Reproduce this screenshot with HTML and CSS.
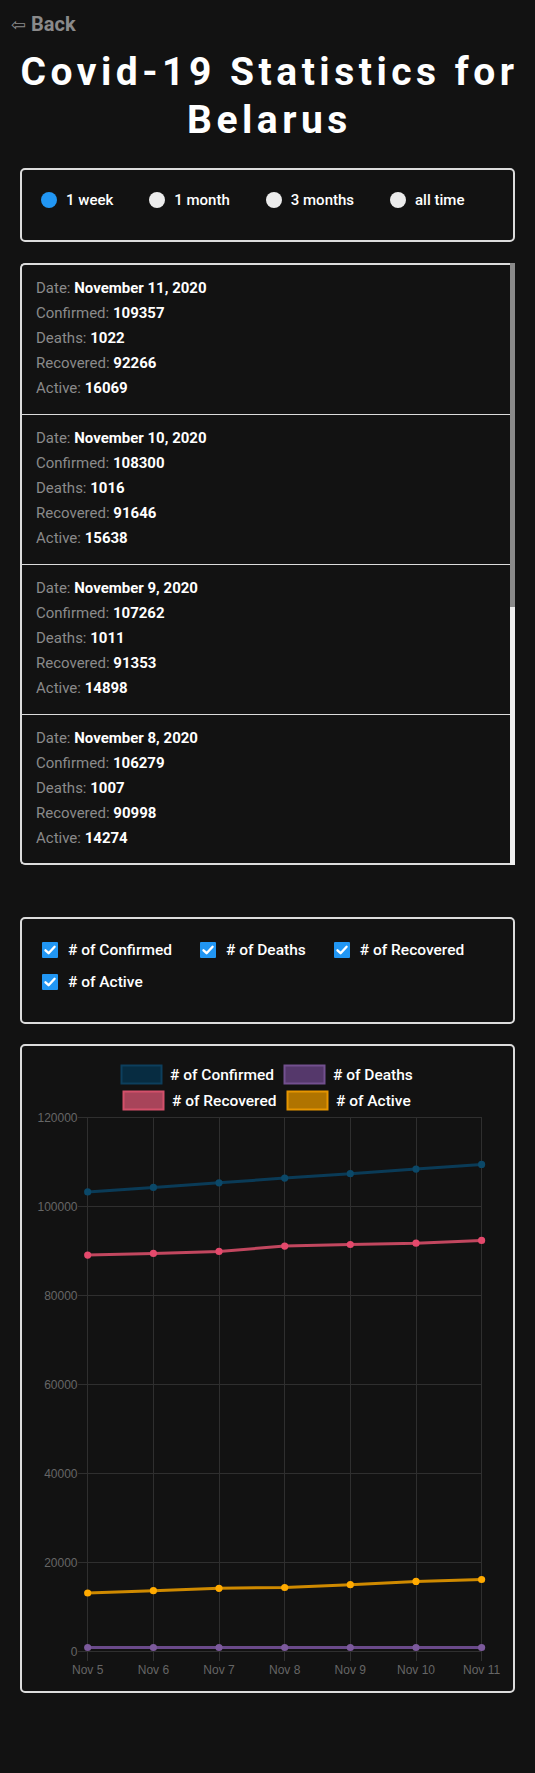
FILE: index.html
```html
<!DOCTYPE html>
<html lang="en">
<head>
<meta charset="utf-8">
<title>Covid-19 Statistics for Belarus</title>
<link rel="stylesheet" href="styles.css">
</head>
<body>
<div class="page">
  <a class="back" href="#"><span class="back-arrow">&#8678;</span> Back</a>
  <h1 class="title">Covid-19 Statistics for Belarus</h1>

  <div class="card periods">
    <label class="opt"><span class="radio checked"></span>1 week</label>
    <label class="opt"><span class="radio"></span>1 month</label>
    <label class="opt"><span class="radio"></span>3 months</label>
    <label class="opt"><span class="radio"></span>all time</label>
  </div>

  <div class="list-wrap">
    <div class="list">
      <div class="day">
        <div class="row"><span class="k">Date: </span><b>November 11, 2020</b></div>
        <div class="row"><span class="k">Confirmed: </span><b>109357</b></div>
        <div class="row"><span class="k">Deaths: </span><b>1022</b></div>
        <div class="row"><span class="k">Recovered: </span><b>92266</b></div>
        <div class="row"><span class="k">Active: </span><b>16069</b></div>
      </div>
      <div class="day">
        <div class="row"><span class="k">Date: </span><b>November 10, 2020</b></div>
        <div class="row"><span class="k">Confirmed: </span><b>108300</b></div>
        <div class="row"><span class="k">Deaths: </span><b>1016</b></div>
        <div class="row"><span class="k">Recovered: </span><b>91646</b></div>
        <div class="row"><span class="k">Active: </span><b>15638</b></div>
      </div>
      <div class="day">
        <div class="row"><span class="k">Date: </span><b>November 9, 2020</b></div>
        <div class="row"><span class="k">Confirmed: </span><b>107262</b></div>
        <div class="row"><span class="k">Deaths: </span><b>1011</b></div>
        <div class="row"><span class="k">Recovered: </span><b>91353</b></div>
        <div class="row"><span class="k">Active: </span><b>14898</b></div>
      </div>
      <div class="day">
        <div class="row"><span class="k">Date: </span><b>November 8, 2020</b></div>
        <div class="row"><span class="k">Confirmed: </span><b>106279</b></div>
        <div class="row"><span class="k">Deaths: </span><b>1007</b></div>
        <div class="row"><span class="k">Recovered: </span><b>90998</b></div>
        <div class="row"><span class="k">Active: </span><b>14274</b></div>
      </div>
      <div class="day">
        <div class="row"><span class="k">Date: </span><b>November 7, 2020</b></div>
        <div class="row"><span class="k">Confirmed: </span><b>105218</b></div>
        <div class="row"><span class="k">Deaths: </span><b>1003</b></div>
        <div class="row"><span class="k">Recovered: </span><b>89797</b></div>
        <div class="row"><span class="k">Active: </span><b>14090</b></div>
      </div>
      <div class="day">
        <div class="row"><span class="k">Date: </span><b>November 6, 2020</b></div>
        <div class="row"><span class="k">Confirmed: </span><b>104171</b></div>
        <div class="row"><span class="k">Deaths: </span><b>998</b></div>
        <div class="row"><span class="k">Recovered: </span><b>89339</b></div>
        <div class="row"><span class="k">Active: </span><b>13550</b></div>
      </div>
      <div class="day">
        <div class="row"><span class="k">Date: </span><b>November 5, 2020</b></div>
        <div class="row"><span class="k">Confirmed: </span><b>103177</b></div>
        <div class="row"><span class="k">Deaths: </span><b>994</b></div>
        <div class="row"><span class="k">Recovered: </span><b>88964</b></div>
        <div class="row"><span class="k">Active: </span><b>13034</b></div>
      </div>
    </div>
    <div class="scrollbar"><div class="scroll-thumb"></div></div>
  </div>

  <div class="card series">
    <label class="opt"><span class="check"><svg viewBox="0 0 16 16" width="16" height="16"><path d="M3.5 8.3 L6.6 11.2 L12.6 4.8" fill="none" stroke="#fff" stroke-width="2.4" stroke-linecap="round" stroke-linejoin="round"/></svg></span># of Confirmed</label>
    <label class="opt"><span class="check"><svg viewBox="0 0 16 16" width="16" height="16"><path d="M3.5 8.3 L6.6 11.2 L12.6 4.8" fill="none" stroke="#fff" stroke-width="2.4" stroke-linecap="round" stroke-linejoin="round"/></svg></span># of Deaths</label>
    <label class="opt"><span class="check"><svg viewBox="0 0 16 16" width="16" height="16"><path d="M3.5 8.3 L6.6 11.2 L12.6 4.8" fill="none" stroke="#fff" stroke-width="2.4" stroke-linecap="round" stroke-linejoin="round"/></svg></span># of Recovered</label>
    <label class="opt"><span class="check"><svg viewBox="0 0 16 16" width="16" height="16"><path d="M3.5 8.3 L6.6 11.2 L12.6 4.8" fill="none" stroke="#fff" stroke-width="2.4" stroke-linecap="round" stroke-linejoin="round"/></svg></span># of Active</label>
  </div>

  <div class="card chart">
    <svg class="chart-svg" width="491" height="645" viewBox="0 0 491 645">
      <g class="legend">
        <rect x="99.5" y="19.5" width="40" height="18" fill="#072c41" stroke="#0d3f5d" stroke-width="2"/>
        <text x="148" y="34">#&#160;of Confirmed</text>
        <rect x="262.5" y="19.5" width="40" height="18" fill="#55386b" stroke="#73508f" stroke-width="2"/>
        <text x="311" y="34">#&#160;of Deaths</text>
        <rect x="101.5" y="45.5" width="40" height="18" fill="#a8445a" stroke="#d3506a" stroke-width="2"/>
        <text x="150" y="60">#&#160;of Recovered</text>
        <rect x="265.5" y="45.5" width="40" height="18" fill="#b07400" stroke="#e69500" stroke-width="2"/>
        <text x="314" y="60">#&#160;of Active</text>
      </g>
      <g class="grid" stroke="#2f2f2f" stroke-width="1">
        <line x1="56" y1="71.5" x2="460" y2="71.5"/>
        <line x1="56" y1="160.5" x2="460" y2="160.5"/>
        <line x1="56" y1="249.5" x2="460" y2="249.5"/>
        <line x1="56" y1="338.5" x2="460" y2="338.5"/>
        <line x1="56" y1="427.5" x2="460" y2="427.5"/>
        <line x1="56" y1="516.5" x2="460" y2="516.5"/>
        <line x1="56" y1="605.5" x2="460" y2="605.5"/>
        <line x1="65.5" y1="71" x2="65.5" y2="615"/>
        <line x1="131.5" y1="71" x2="131.5" y2="615"/>
        <line x1="197.5" y1="71" x2="197.5" y2="615"/>
        <line x1="262.5" y1="71" x2="262.5" y2="615"/>
        <line x1="328.5" y1="71" x2="328.5" y2="615"/>
        <line x1="394.5" y1="71" x2="394.5" y2="615"/>
        <line x1="459.5" y1="71" x2="459.5" y2="615"/>
      </g>
      <g class="ylab" text-anchor="end">
        <text x="55.5" y="75.5">120000</text>
        <text x="55.5" y="164.5">100000</text>
        <text x="55.5" y="253.5">80000</text>
        <text x="55.5" y="342.5">60000</text>
        <text x="55.5" y="431.5">40000</text>
        <text x="55.5" y="520.5">20000</text>
        <text x="55.5" y="609.5">0</text>
      </g>
      <g class="xlab" text-anchor="middle">
        <text x="65.7" y="628">Nov 5</text>
        <text x="131.4" y="628">Nov 6</text>
        <text x="197" y="628">Nov 7</text>
        <text x="262.7" y="628">Nov 8</text>
        <text x="328.3" y="628">Nov 9</text>
        <text x="394" y="628">Nov 10</text>
        <text x="459.6" y="628">Nov 11</text>
      </g>
      <g class="series-confirmed">
        <polyline points="65.7,145.9 131.4,141.4 197,136.8 262.7,132.1 328.3,127.7 394,123.1 459.6,118.4" fill="none" stroke="#0a3b57" stroke-width="3"/>
        <g fill="#0b4868">
          <circle cx="65.7" cy="145.9" r="3.6"/><circle cx="131.4" cy="141.4" r="3.6"/><circle cx="197" cy="136.8" r="3.6"/><circle cx="262.7" cy="132.1" r="3.6"/><circle cx="328.3" cy="127.7" r="3.6"/><circle cx="394" cy="123.1" r="3.6"/><circle cx="459.6" cy="118.4" r="3.6"/>
        </g>
      </g>
      <g class="series-recovered">
        <polyline points="65.7,209.1 131.4,207.4 197,205.4 262.7,200.1 328.3,198.5 394,197.2 459.6,194.4" fill="none" stroke="#c2475f" stroke-width="3"/>
        <g fill="#e4496c">
          <circle cx="65.7" cy="209.1" r="3.6"/><circle cx="131.4" cy="207.4" r="3.6"/><circle cx="197" cy="205.4" r="3.6"/><circle cx="262.7" cy="200.1" r="3.6"/><circle cx="328.3" cy="198.5" r="3.6"/><circle cx="394" cy="197.2" r="3.6"/><circle cx="459.6" cy="194.4" r="3.6"/>
        </g>
      </g>
      <g class="series-active">
        <polyline points="65.7,547 131.4,544.7 197,542.3 262.7,541.5 328.3,538.7 394,535.4 459.6,533.5" fill="none" stroke="#cf8a00" stroke-width="3"/>
        <g fill="#ffaa00">
          <circle cx="65.7" cy="547" r="3.6"/><circle cx="131.4" cy="544.7" r="3.6"/><circle cx="197" cy="542.3" r="3.6"/><circle cx="262.7" cy="541.5" r="3.6"/><circle cx="328.3" cy="538.7" r="3.6"/><circle cx="394" cy="535.4" r="3.6"/><circle cx="459.6" cy="533.5" r="3.6"/>
        </g>
      </g>
      <g class="series-deaths">
        <polyline points="65.7,601.5 131.4,601.5 197,601.5 262.7,601.5 328.3,601.5 394,601.5 459.6,601.5" fill="none" stroke="#6a4a8a" stroke-width="3"/>
        <g fill="#7c5a9c">
          <circle cx="65.7" cy="601.5" r="3.6"/><circle cx="131.4" cy="601.5" r="3.6"/><circle cx="197" cy="601.5" r="3.6"/><circle cx="262.7" cy="601.5" r="3.6"/><circle cx="328.3" cy="601.5" r="3.6"/><circle cx="394" cy="601.5" r="3.6"/><circle cx="459.6" cy="601.5" r="3.6"/>
        </g>
      </g>
    </svg>
  </div>
</div>
</body>
</html>
```

FILE: styles.css
```css
html {
  background: #121212;
}

body {
  margin: 0;
  background: #121212;
  color: #fff;
  font-family: "Roboto", "Liberation Sans", sans-serif;
}

.page {
  width: 535px;
  padding-bottom: 78px;
}

.back {
  display: block;
  padding: 12px 11px 0;
  font-size: 20px;
  line-height: 24px;
  font-weight: 700;
  color: #8a8a8a;
  text-decoration: none;
}

.back-arrow {
  font-family: "DejaVu Sans", sans-serif;
  font-weight: 400;
  font-size: 18px;
}

.title {
  margin: 11px 0 0;
  text-align: center;
  font-size: 39px;
  line-height: 48px;
  font-weight: 700;
  letter-spacing: 4.5px;
  padding-left: 4px;
}

.card {
  margin: 0 20px;
  border: 2px solid #dcdcdc;
  border-radius: 5px;
  background: #121212;
}

.opt {
  display: flex;
  align-items: center;
  color: #fff;
  font-weight: 500;
}

.periods {
  margin-top: 24px;
  display: flex;
  gap: 36px;
  padding: 22px 19px 32px;
}

.periods .opt {
  font-size: 15px;
  line-height: 16px;
  gap: 9px;
}

.radio {
  width: 16px;
  height: 16px;
  border-radius: 50%;
  background: #ececec;
}

.radio.checked {
  background: #2196f3;
}

.list-wrap {
  position: relative;
  margin: 21px 20px 0;
}

.list {
  max-height: 598px;
  overflow-y: auto;
  border: 2px solid #dcdcdc;
  border-right: 0;
  border-radius: 5px 0 0 5px;
  scrollbar-width: none;
}

.list::-webkit-scrollbar {
  display: none;
}

.scrollbar {
  position: absolute;
  top: 0;
  right: 0;
  bottom: 0;
  width: 5px;
  background: #efefef;
}

.scroll-thumb {
  height: 344px;
  background: #8a8a8a;
}

.day {
  padding: 11px 14px 13px;
  border-bottom: 1px solid #dcdcdc;
  font-size: 15px;
  line-height: 25px;
}

.day:last-child {
  border-bottom: none;
}

.k {
  color: #8a8a8a;
}

.day b {
  font-weight: 700;
  color: #fff;
}

.series {
  margin-top: 52px;
  display: flex;
  flex-wrap: wrap;
  column-gap: 28px;
  row-gap: 12px;
  padding: 21px 20px 30px;
}

.series .opt {
  font-size: 15.5px;
  line-height: 20px;
  gap: 10px;
}

.check {
  width: 16px;
  height: 16px;
  background: #2196f3;
  border-radius: 1px;
  display: flex;
}

.chart {
  margin-top: 20px;
  height: 645px;
}

.chart-svg {
  display: block;
}

.legend text {
  font-family: "Roboto", "Liberation Sans", sans-serif;
  font-size: 15.5px;
  font-weight: 500;
  fill: #ffffff;
}

.ylab text,
.xlab text {
  font-family: "Liberation Sans", Arial, sans-serif;
  font-size: 12px;
  fill: #666;
}
```
